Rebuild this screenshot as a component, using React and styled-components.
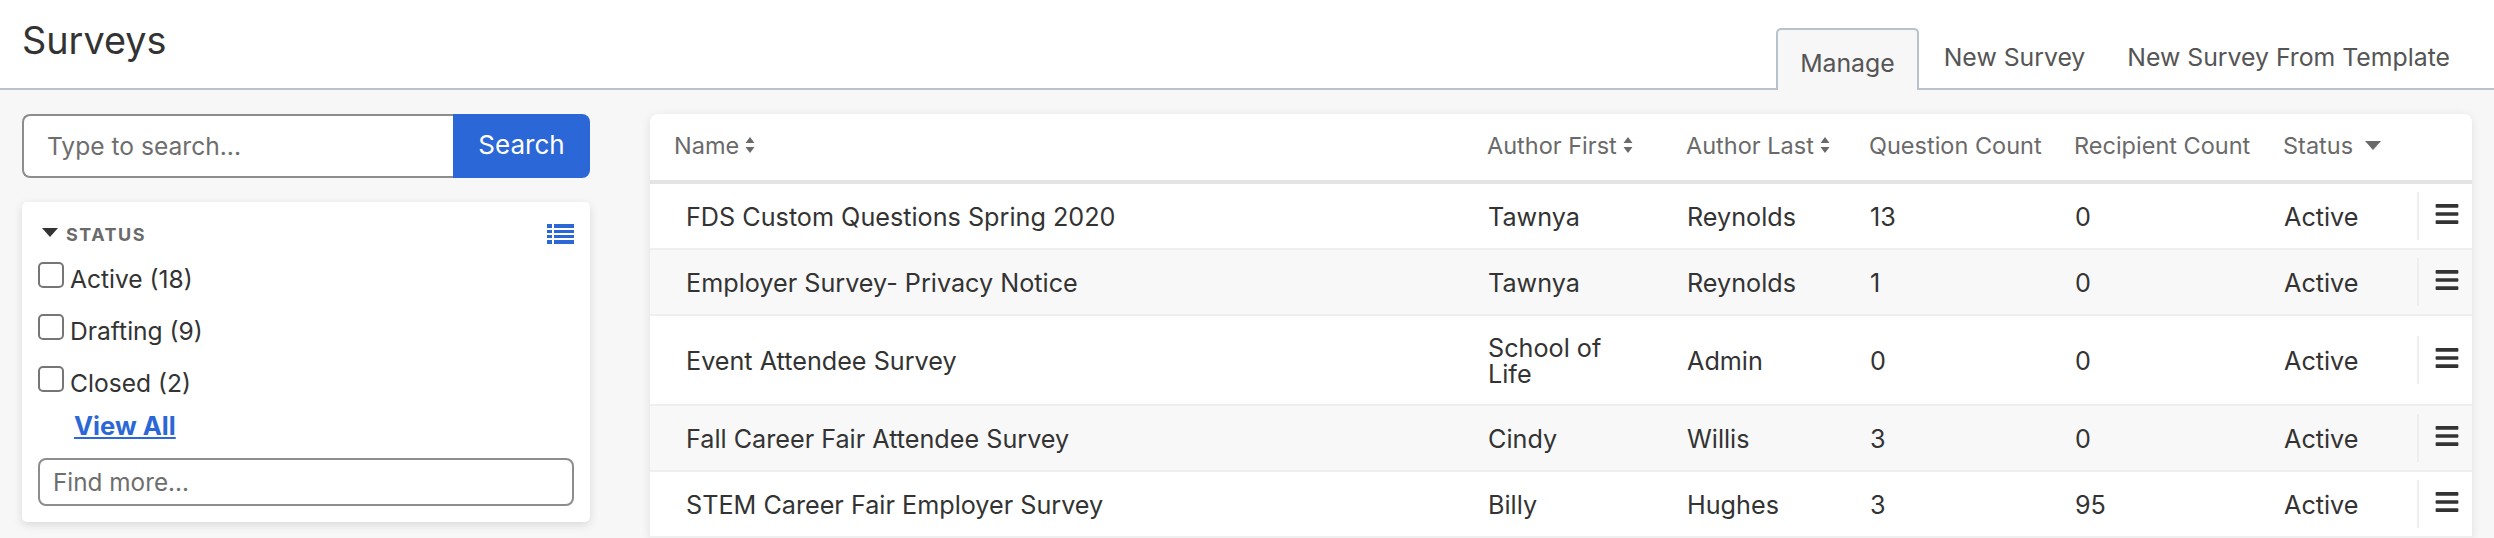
import React from "react";
import styled, { createGlobalStyle } from "styled-components";
import { FaBars } from "react-icons/fa";

const GlobalStyle = createGlobalStyle`
  html, body {
    margin: 0;
    height: 538px;
    overflow: hidden;
    background: #f7f7f7;
    font-family: Inter, "Liberation Sans", sans-serif;
    color: #333;
  }
  * {
    box-sizing: border-box;
  }
`;

const Header = styled.header`
  height: 90px;
  background: #fff;
  border-bottom: 2px solid #b8c2cc;
  display: flex;
  justify-content: space-between;
  padding: 0 23px 0 22px;
`;

const Title = styled.h1`
  margin: 16px 0 0;
  font-size: 37.8px;
  line-height: 48px;
  font-weight: 400;
  color: #333;
`;

const Tabs = styled.nav`
  display: flex;
  align-items: flex-start;
  padding-top: 28px;
`;

const Tab = styled.a`
  height: 62px;
  font-size: 24.8px;
  color: #555;
  padding: 0 21px;
  margin-left: ${(p) => p.$gap || 0}px;
  ${(p) =>
    p.$active
      ? `
    line-height: 62px;
    padding: 2px 22px 0;
    background: #f7f7f7;
    border: 2px solid #b8c2cc;
    border-bottom: none;
    border-radius: 5px 5px 0 0;
  `
      : `
    line-height: 58px;
  `}
`;

const Main = styled.main`
  display: flex;
  gap: 60px;
  padding: 24px 22px 0;
  align-items: flex-start;
`;

const Sidebar = styled.aside`
  width: 568px;
  flex: none;
`;

const SearchBar = styled.form`
  display: flex;
  height: 64px;
  margin-bottom: 24px;
`;

const SearchInput = styled.input`
  flex: 1;
  min-width: 0;
  border: 2px solid #8d8d8d;
  border-right: none;
  border-radius: 8px 0 0 8px;
  background: #fff;
  padding: 0 23px;
  font: inherit;
  font-size: 24.6px;
  outline: none;
  &::placeholder {
    color: #6e6e6e;
    opacity: 1;
  }
`;

const SearchButton = styled.button`
  width: 137px;
  border: none;
  border-radius: 0 8px 8px 0;
  background: #2b67d6;
  color: #fff;
  font: inherit;
  font-size: 26px;
  padding: 0 0 4px;
`;

const FilterCard = styled.section`
  height: 320px;
  background: #fff;
  border-radius: 5px;
  box-shadow: 0 3px 10px rgba(0, 0, 0, 0.12);
  padding: 20px 16px 16px;
`;

const FilterHead = styled.div`
  display: flex;
  align-items: center;
  height: 24px;
  padding-left: 4px;
  margin-bottom: 16px;
  color: #6a6a6a;
  font-size: 18px;
  font-weight: 700;
  letter-spacing: 1.5px;
`;

const ListIcon = styled.svg`
  width: 27px;
  height: 22px;
  margin-left: auto;
  fill: #2b67d6;
`;

const Caret = styled.svg`
  width: 16px;
  height: 9px;
  margin-right: 8px;
  margin-bottom: 4px;
  fill: ${(p) => p.$color || "#333"};
`;

const CheckRow = styled.label`
  display: flex;
  align-items: flex-start;
  height: 52px;
  font-size: 24.6px;
  line-height: 32px;
  color: #333;
`;

const CheckBox = styled.input`
  appearance: none;
  width: 26px;
  height: 26px;
  margin: 0 6px 0 0;
  background: #fff;
  border: 2px solid #767676;
  border-radius: 5px;
`;

const CheckLabel = styled.span`
  padding-top: 1px;
`;

const ViewAll = styled.a`
  display: block;
  margin: -8px 0 0 36px;
  font-size: 25.6px;
  line-height: 32px;
  font-weight: 700;
  color: #2b67d6;
  text-decoration: underline;
`;

const FindInput = styled.input`
  display: block;
  width: 100%;
  height: 48px;
  margin-top: 16px;
  border: 2px solid #8d8d8d;
  border-radius: 8px;
  padding: 0 13px;
  font: inherit;
  font-size: 24.3px;
  outline: none;
  &::placeholder {
    color: #6e6e6e;
    opacity: 1;
  }
`;

const TableCard = styled.section`
  flex: 1;
  background: #fff;
  border-radius: 8px 8px 0 0;
  box-shadow: 0 2px 10px rgba(0, 0, 0, 0.1);
`;

const columns = "837px 199px 183px 205px 209px 134px 55px";

const HeadRow = styled.div`
  display: grid;
  grid-template-columns: ${columns};
  align-items: center;
  height: 70px;
  border-bottom: 4px solid #e4e4e4;
  padding-bottom: 4px;
  font-size: 23.5px;
  color: #6a6a6a;
`;

const HeadCell = styled.div`
  display: flex;
  align-items: center;
  white-space: nowrap;
  &:first-child {
    padding-left: 24px;
  }
`;

const SortIcon = styled.svg`
  width: 10px;
  height: 20px;
  margin-left: 6px;
  fill: #6a6a6a;
`;

const Row = styled.div`
  display: grid;
  grid-template-columns: ${columns};
  align-items: center;
  min-height: 66px;
  background: ${(p) => (p.$alt ? "#f8f8f8" : "#fff")};
  border-bottom: 2px solid #efefef;
  font-size: 25.2px;
  line-height: 26px;
  color: #333;
`;

const Cell = styled.div`
  padding: 19px 40px 17px 1px;
  &:first-child {
    padding-left: 36px;
  }
`;

const ActionCell = styled.div`
  height: 48px;
  border-left: 2px solid #eee;
  padding: 9px 0 0 15px;
  font-size: 26px;
  color: #333;
  & > svg {
    display: block;
  }
`;

const Sort = () => (
  <SortIcon viewBox="0 0 10 20">
    <path d="M5 2 9.5 8H.5zM5 18 .5 12h9z" />
  </SortIcon>
);

const surveys = [
  { name: "FDS Custom Questions Spring 2020", first: "Tawnya", last: "Reynolds", questions: 13, recipients: 0 },
  { name: "Employer Survey- Privacy Notice", first: "Tawnya", last: "Reynolds", questions: 1, recipients: 0 },
  { name: "Event Attendee Survey", first: "School of Life", last: "Admin", questions: 0, recipients: 0 },
  { name: "Fall Career Fair Attendee Survey", first: "Cindy", last: "Willis", questions: 3, recipients: 0 },
  { name: "STEM Career Fair Employer Survey", first: "Billy", last: "Hughes", questions: 3, recipients: 95 },
];

const statuses = ["Active (18)", "Drafting (9)", "Closed (2)"];

const App = () => (
  <>
    <GlobalStyle />
    <Header>
      <Title>Surveys</Title>
      <Tabs>
        <Tab $active>Manage</Tab>
        <Tab $gap={4}>New Survey</Tab>
        <Tab>New Survey From Template</Tab>
      </Tabs>
    </Header>
    <Main>
      <Sidebar>
        <SearchBar>
          <SearchInput placeholder="Type to search..." />
          <SearchButton type="button">Search</SearchButton>
        </SearchBar>
        <FilterCard>
          <FilterHead>
            <Caret viewBox="0 0 16 9">
              <path d="M0 0h16L8 9z" />
            </Caret>
            STATUS
            <ListIcon viewBox="0 0 27 22">
              <path d="M0 1h5v4H0zM7 1h20v4H7zM0 7h5v3H0zM7 7h20v3H7zM0 12h5v3H0zM7 12h20v3H7zM0 17h5v4H0zM7 17h20v4H7z" />
            </ListIcon>
          </FilterHead>
          {statuses.map((status) => (
            <CheckRow key={status}>
              <CheckBox type="checkbox" />
              <CheckLabel>{status}</CheckLabel>
            </CheckRow>
          ))}
          <ViewAll>View All</ViewAll>
          <FindInput placeholder="Find more..." />
        </FilterCard>
      </Sidebar>
      <TableCard>
        <HeadRow>
          <HeadCell>
            Name
            <Sort />
          </HeadCell>
          <HeadCell>
            Author First
            <Sort />
          </HeadCell>
          <HeadCell>
            Author Last
            <Sort />
          </HeadCell>
          <HeadCell>Question Count</HeadCell>
          <HeadCell>Recipient Count</HeadCell>
          <HeadCell>
            Status
            <Caret viewBox="0 0 16 9" $color="#6a6a6a" style={{ margin: "0 0 0 12px" }}>
              <path d="M0 0h16L8 9z" />
            </Caret>
          </HeadCell>
          <div />
        </HeadRow>
        {surveys.map((survey, i) => (
          <Row key={survey.name} $alt={i % 2 === 1}>
            <Cell>{survey.name}</Cell>
            <Cell>{survey.first}</Cell>
            <Cell>{survey.last}</Cell>
            <Cell>{survey.questions}</Cell>
            <Cell>{survey.recipients}</Cell>
            <Cell>Active</Cell>
            <ActionCell>
              <FaBars />
            </ActionCell>
          </Row>
        ))}
      </TableCard>
    </Main>
  </>
);

export default App;
